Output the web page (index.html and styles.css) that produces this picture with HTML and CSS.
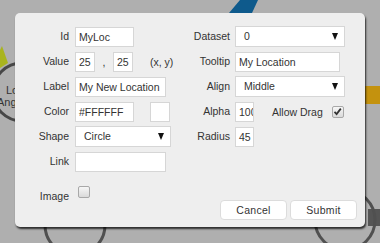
FILE: index.html
```html
<!DOCTYPE html>
<html lang="en">
  <head>
    <meta charset="UTF-8" />
    <title>Edit location</title>
    <link rel="stylesheet" href="styles.css">
  </head>
  <body>
    <div class="canvas">
      <svg class="diagram" width="380" height="243" viewBox="0 0 380 243">
        <polygon points="240,0 258,0 252,13 229,13" fill="#0e5a8c" />
        <rect x="362" y="86" width="18" height="18" fill="#c4920e" />
        <rect x="368" y="209" width="12" height="17" fill="#555" />
        <polygon points="0,50 2,46 8,63 0,68" fill="#a9b41e" />
        <circle cx="22" cy="92" r="29" fill="none" stroke="#474747" stroke-width="3" />
        <circle cx="75" cy="225" r="30" fill="none" stroke="#505050" stroke-width="3" />
        <circle cx="345" cy="220" r="30" fill="none" stroke="#505050" stroke-width="3" />
        <text x="6" y="94" class="node-text">Lo</text>
        <text x="-3" y="106" class="node-text">Ang</text>
      </svg>

      <div class="dialog">
        <div class="form">
          <label class="lbl">Id</label>
          <div class="field"><span class="input w59">MyLoc</span></div>
          <label class="lbl lbl-r">Dataset</label>
          <div class="field"><span class="select w110">0</span></div>

          <label class="lbl">Value</label>
          <div class="field">
            <span class="input w20">25</span>
            <span class="comma">,</span>
            <span class="input w20">25</span>
            <span class="hint">(x, y)</span>
          </div>
          <label class="lbl lbl-r">Tooltip</label>
          <div class="field"><span class="input w105">My Location</span></div>

          <label class="lbl">Label</label>
          <div class="field"><span class="input w91">My New Location</span></div>
          <label class="lbl lbl-r">Align</label>
          <div class="field"><span class="select w110">Middle</span></div>

          <label class="lbl">Color</label>
          <div class="field">
            <span class="input w59">#FFFFFF</span>
            <span class="swatch"></span>
          </div>
          <label class="lbl lbl-r">Alpha</label>
          <div class="field">
            <span class="input w19 clip">100</span>
            <span class="drag-label">Allow Drag</span>
            <span class="check checked">
              <svg width="9" height="9" viewBox="0 0 9 9"><path d="M1.5 4.8 L3.6 7 L7.8 1.6" fill="none" stroke="#333" stroke-width="1.8" /></svg>
            </span>
          </div>

          <label class="lbl">Shape</label>
          <div class="field"><span class="select w96">Circle</span></div>
          <label class="lbl lbl-r">Radius</label>
          <div class="field"><span class="input w19">45</span></div>

          <label class="lbl">Link</label>
          <div class="field"><span class="input w91"></span></div>
          <span></span>
          <span></span>

          <label class="lbl image-row">Image</label>
          <div class="field image-row"><span class="check"></span></div>
        </div>

        <div class="actions">
          <button class="btn">Cancel</button>
          <button class="btn">Submit</button>
        </div>
      </div>
    </div>
  </body>
</html>
```

FILE: styles.css
```css
body {
  margin: 0;
  font-family: "Liberation Sans", Arial, sans-serif;
  font-size: 10.5px;
  color: #333;
}
.canvas {
  position: relative;
  width: 380px;
  height: 243px;
  background-color: #afafaf;
  overflow: hidden;
}
.diagram {
  position: absolute;
  left: 0;
  top: 0;
}
.node-text {
  font-family: "Liberation Sans", Arial, sans-serif;
  font-size: 11px;
  fill: #333;
}
.dialog {
  position: absolute;
  left: 15px;
  top: 13px;
  width: 350px;
  height: 214px;
  box-sizing: border-box;
  padding: 13px 8px 7px 0;
  background-color: #eeeeee;
  border-radius: 5px;
  box-shadow: 1px 2px 2px rgba(0, 0, 0, 0.75);
  display: flex;
  flex-direction: column;
}
.form {
  display: grid;
  grid-template-columns: 60px 110px 50px 110px;
  grid-auto-rows: 21px;
  row-gap: 4px;
}
.lbl {
  text-align: right;
  padding-right: 6px;
  line-height: 21px;
  white-space: nowrap;
}
.lbl-r {
  padding-right: 5px;
}
.field {
  display: flex;
  align-items: center;
  white-space: nowrap;
}
.image-row {
  margin-top: 10px;
}
.input,
.select {
  box-sizing: border-box;
  height: 20px;
  line-height: 18px;
  background-color: #fff;
  border: 1px solid #d6d6d6;
  padding: 0 3px;
  white-space: nowrap;
  overflow: hidden;
}
.select {
  height: 21px;
  line-height: 19px;
  padding: 0 6px 0 8px;
  display: flex;
  justify-content: space-between;
  align-items: center;
}
.select::after {
  content: "";
  width: 0;
  height: 0;
  border-top: 7px solid #111;
  border-left: 3.5px solid transparent;
  border-right: 3.5px solid transparent;
}
.w19 { width: 19px; }
.w20 { width: 20px; }
.w59 { width: 59px; }
.w91 { width: 91px; }
.w96 { width: 96px; }
.w105 { width: 105px; }
.w110 { width: 110px; }
.clip {
  padding-right: 0;
  flex-shrink: 0;
}
.comma {
  width: 18px;
  text-align: center;
}
.hint {
  margin-left: 17px;
}
.swatch {
  box-sizing: border-box;
  width: 20px;
  height: 20px;
  margin-left: 16px;
  background-color: #fff;
  border: 1px solid #d6d6d6;
}
.drag-label {
  margin-left: 18px;
}
.check {
  box-sizing: border-box;
  flex-shrink: 0;
  width: 12px;
  height: 12px;
  margin-left: 3px;
  border: 1px solid #a8a8a8;
  border-radius: 2px;
  background: linear-gradient(#f6f6f6, #dadada);
  display: flex;
  align-items: center;
  justify-content: center;
}
.check.checked {
  margin-left: 9px;
}
.actions {
  margin-top: auto;
  display: flex;
  justify-content: flex-end;
  gap: 3px;
}
.btn {
  width: 67px;
  height: 20px;
  padding: 0;
  font-family: inherit;
  font-size: 10.5px;
  letter-spacing: 0.3px;
  color: #333;
  background-color: #fff;
  border: 1px solid #dcdcdc;
  border-radius: 4px;
}
```
